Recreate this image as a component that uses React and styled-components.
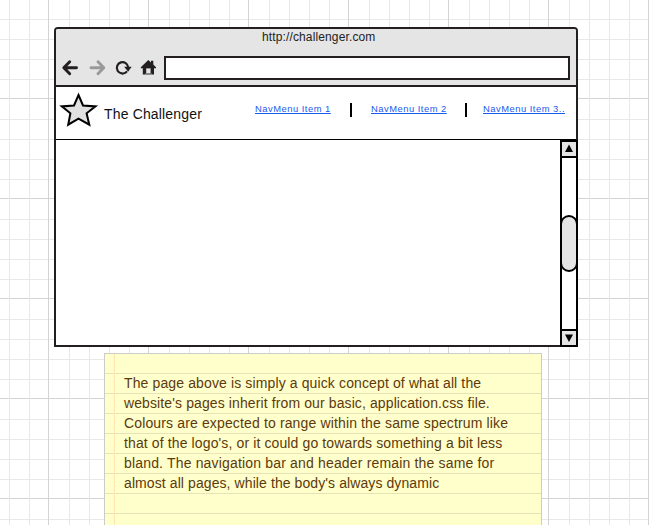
import React from "react";
import styled, { createGlobalStyle } from "styled-components";

const GlobalStyle = createGlobalStyle`
  * { box-sizing: border-box; }
  body { margin: 0; overflow: hidden; background: #fff; font-family: "Liberation Sans", Arial, sans-serif; }
`;

const INK = "#231f20";

const gridStops = [
  "#d3d3d3 0 1px", "transparent 1px 21px",
  "#e8e8e8 21px 22px", "transparent 22px 41px",
  "#e8e8e8 41px 42px", "transparent 42px 61px",
  "#e8e8e8 61px 62px", "transparent 62px 81px",
  "#e8e8e8 81px 82px", "transparent 82px 100px",
].join(", ");

const Canvas = styled.main`
  width: 649px;
  height: 525px;
  overflow: hidden;
  padding: 27px 0 0 54px;
  background-color: #fff;
  background-image:
    linear-gradient(90deg, ${gridStops}),
    linear-gradient(180deg, ${gridStops});
  background-size: 100px 100px;
  background-position: 48px 0, 0 98px;
`;

const BrowserWindow = styled.section`
  width: 524px;
  height: 320px;
  display: flex;
  flex-direction: column;
  border: 2px solid ${INK};
  border-radius: 4px 4px 0 0;
  background: #fff;
`;

const Chrome = styled.header`
  height: 58px;
  flex: none;
  border-bottom: 2px solid ${INK};
  border-radius: 2px 2px 0 0;
  background: #e5e5e5;
`;

const WindowTitle = styled.div`
  height: 27px;
  padding: 1px 0 0 206px;
  font-size: 12px;
  line-height: 14px;
  letter-spacing: 0.13px;
  color: #222;
  white-space: nowrap;
`;

const Toolbar = styled.div`
  display: flex;
  padding-right: 6px;
`;

const ToolbarIcons = styled.svg`
  width: 108px;
  height: 24px;
  flex: none;
`;

const AddressBar = styled.div`
  flex: 1;
  height: 24px;
  border: 2px solid ${INK};
  background: #fff;
`;

const SiteHeader = styled.div`
  height: 53px;
  flex: none;
  display: flex;
  border-bottom: 1px solid #000;
`;

const Logo = styled.svg`
  width: 48px;
  height: 48px;
  flex: none;
`;

const Brand = styled.div`
  width: 151px;
  padding-top: 19px;
  font-size: 14px;
  line-height: 16px;
  letter-spacing: 0.16px;
  color: #111;
  white-space: nowrap;
`;

const Nav = styled.nav`
  display: flex;
  padding-top: 16px;
`;

const NavLink = styled.a`
  width: ${(p) => p.$width}px;
  flex: none;
  font-size: 9.4px;
  line-height: 12px;
  letter-spacing: 0.5px;
  color: #1a5cf0;
  text-decoration: underline;
  white-space: nowrap;
`;

const Divider = styled.span`
  width: 2px;
  height: 14px;
  flex: none;
  margin-right: ${(p) => p.$gap}px;
  background: #000;
`;

const Page = styled.div`
  flex: 1;
  display: flex;
  justify-content: flex-end;
`;

const Scrollbar = styled.div`
  width: 18px;
  height: 207px;
  margin-right: -2px;
  display: flex;
  flex-direction: column;
  border: 2px solid #000;
  background: #fff;
`;

const ScrollButton = styled.div`
  height: 16px;
  flex: none;
  background: #e5e5e5;
  border-top: ${(p) => (p.$down ? "2px solid #000" : "0")};
  border-bottom: ${(p) => (p.$down ? "0" : "2px solid #000")};
`;

const Arrow = styled.svg`
  display: block;
  width: 14px;
  height: 14px;
`;

const Track = styled.div`
  flex: 1;
  padding-top: 57px;
`;

const Thumb = styled.div`
  height: 57px;
  margin: 0 -2px;
  border: 2px solid #000;
  border-radius: 9px;
  background: #e5e5e5;
`;

const Note = styled.aside`
  width: 438px;
  height: 190px;
  margin: 6px 0 0 50px;
  padding: 19px 0 0 19px;
  border: 1px solid #ccc;
  color: #5c3a0c;
  font-size: 14px;
  line-height: 20px;
  white-space: nowrap;
  background-color: #ffffcc;
  background-image:
    linear-gradient(90deg, #ffe5b0 1px, transparent 1px),
    linear-gradient(#e5e3b7 1px, transparent 1px);
  background-size: 100% 100%, 100% 20px;
  background-position: 9px 0, 0 19px;
  background-repeat: no-repeat, repeat-y;
`;

const NoteLine = styled.div`
  height: 20px;
  letter-spacing: ${(p) => p.$spacing}px;
`;

const noteLines = [
  { text: "The page above is simply a quick concept of what all the", spacing: 0.125 },
  { text: "website's pages inherit from our basic, application.css file.", spacing: 0.11 },
  { text: "Colours are expected to range within the same spectrum like", spacing: 0.14 },
  { text: "that of the logo's, or it could go towards something a bit less", spacing: 0.12 },
  { text: "bland. The navigation bar and header remain the same for", spacing: 0.17 },
  { text: "almost all pages, while the body's always dynamic", spacing: 0.09 },
];

function BrowserControls() {
  return (
    <ToolbarIcons viewBox="56 56 108 24" fill="none">
      <path d="M69.7 61.8L63.8 67.8L69.7 73.8M64.2 67.8H76.5" stroke={INK} strokeWidth="2.9" strokeLinecap="round" strokeLinejoin="round" />
      <path d="M98 61.8L103.8 67.8L98 73.8M103.5 67.8H91" stroke="#999" strokeWidth="2.9" strokeLinecap="round" strokeLinejoin="round" />
      <path d="M126.4 72A5.7 5.7 0 1 1 128.2 67.3" stroke={INK} strokeWidth="2.2" strokeLinecap="round" />
      <path d="M124.2 66.8L131.6 66.8L128.1 71.7Z" fill={INK} />
      <path d="M148.3 60L151 62.5V60.8H153.3V64.6L156 67.3V68.3H154V74.6H142.8V68.3H140.8V67.3Z" fill={INK} />
      <path d="M146.2 68.4H150.6V73.4H146.2Z" fill="#e5e5e5" />
      <path d="M145 74H152" stroke="#999" />
    </ToolbarIcons>
  );
}

export default function App() {
  return (
    <>
      <GlobalStyle />
      <Canvas>
        <BrowserWindow>
          <Chrome>
            <WindowTitle>http://challenger.com</WindowTitle>
            <Toolbar>
              <BrowserControls />
              <AddressBar />
            </Toolbar>
          </Chrome>
          <SiteHeader>
            <Logo viewBox="56 87 48 48">
              <path d="M78.5 95L83 105.5L95.5 106.4L86.6 113.3L89.3 124.7L78.5 118.7L68.2 124.7L70.4 113.3L61.8 106.4L74 105.5Z" fill="#e0e0e0" stroke="#000" strokeWidth="2" />
            </Logo>
            <Brand>The Challenger</Brand>
            <Nav>
              <NavLink $width={95}>NavMenu Item 1</NavLink>
              <Divider $gap={19} />
              <NavLink $width={94}>NavMenu Item 2</NavLink>
              <Divider $gap={16} />
              <NavLink $width={88}>NavMenu Item 3..</NavLink>
            </Nav>
          </SiteHeader>
          <Page>
            <Scrollbar>
              <ScrollButton>
                <Arrow viewBox="0 0 14 14"><path d="M7 2.5L11 10H3Z" /></Arrow>
              </ScrollButton>
              <Track><Thumb /></Track>
              <ScrollButton $down>
                <Arrow viewBox="0 0 14 14"><path d="M7 11L11 3.5H3Z" /></Arrow>
              </ScrollButton>
            </Scrollbar>
          </Page>
        </BrowserWindow>
        <Note>
          {noteLines.map((line) => (
            <NoteLine key={line.text} $spacing={line.spacing}>{line.text}</NoteLine>
          ))}
        </Note>
      </Canvas>
    </>
  );
}
